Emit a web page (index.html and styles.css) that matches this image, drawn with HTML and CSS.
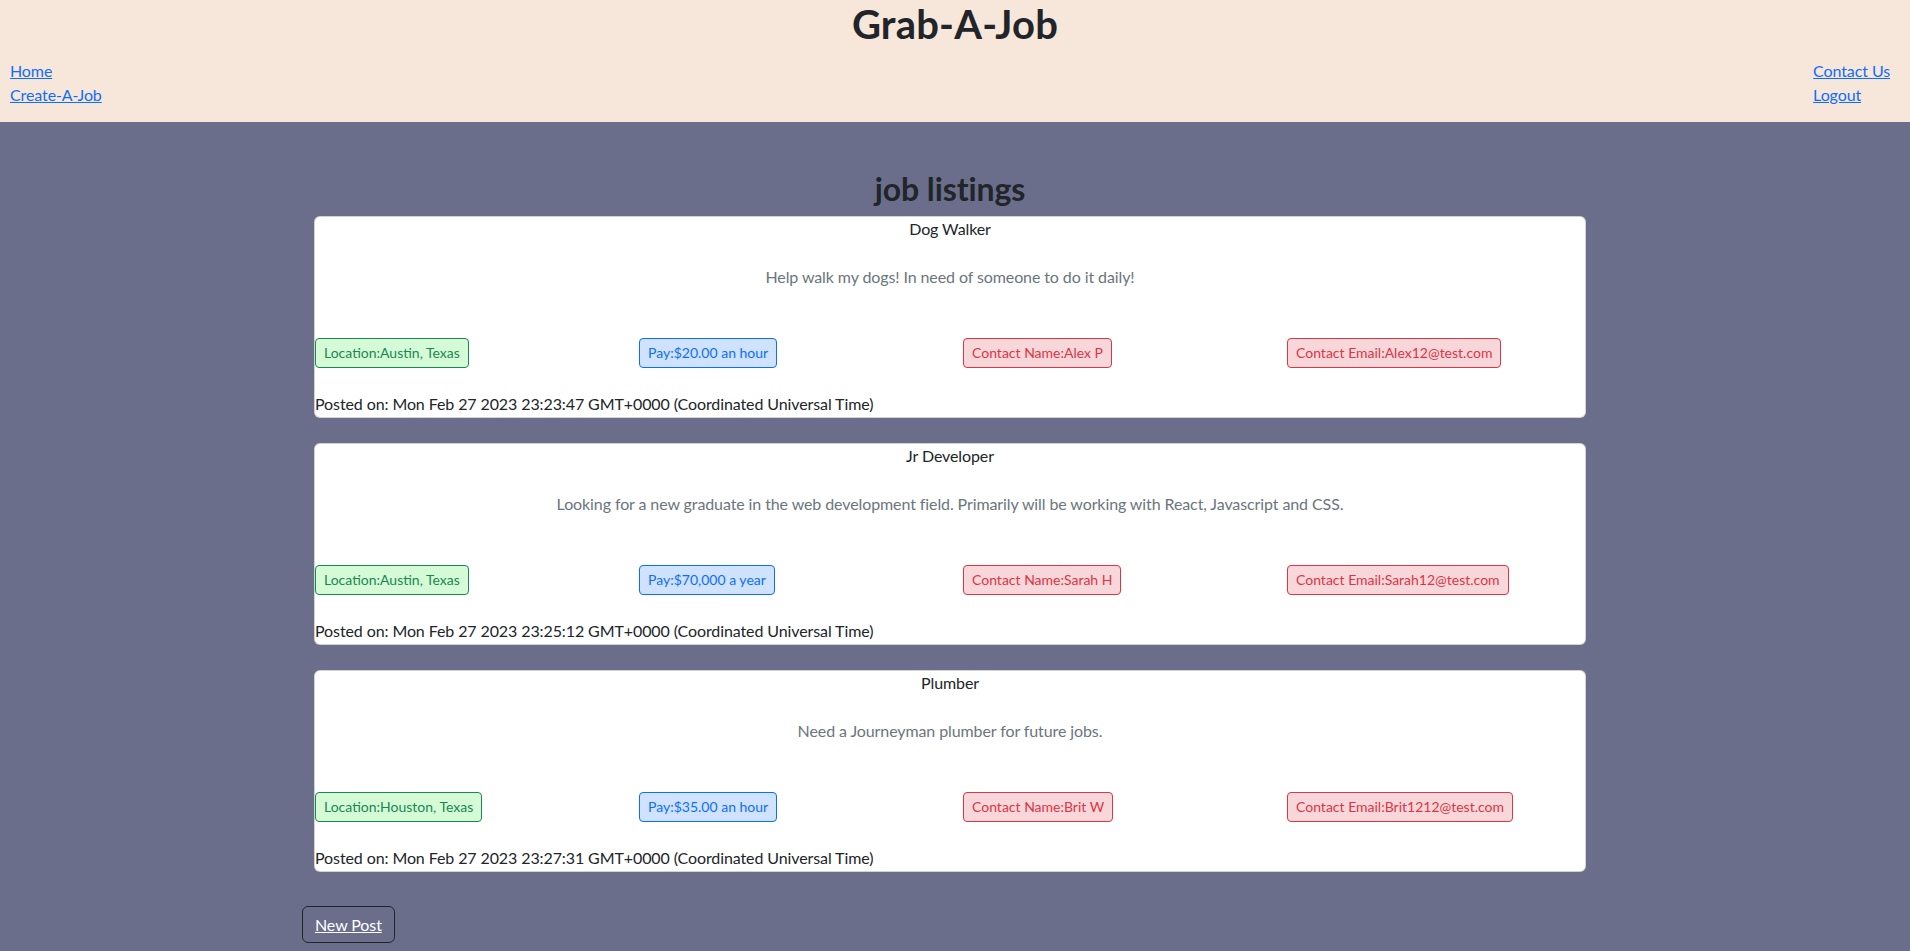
FILE: index.html
```html
<!DOCTYPE html>
<html lang="en">
<head>
<meta charset="utf-8">
<title>Grab-A-Job</title>
<link rel="stylesheet" href="styles.css">
</head>
<body>
<header class="site-header">
  <h1 class="brand">Grab-A-Job</h1>
  <nav class="nav">
    <div class="nav-col">
      <a href="#">Home</a>
      <a href="#">Create-A-Job</a>
    </div>
    <div class="nav-col">
      <a href="#">Contact Us</a>
      <a href="#">Logout</a>
    </div>
  </nav>
</header>
<main class="main">
  <div class="container">
    <h2 class="page-title">job listings</h2>

    <div class="card">
      <div class="card-title">Dog Walker</div>
      <p class="card-desc">Help walk my dogs! In need of someone to do it daily!</p>
      <div class="badge-row">
        <div><span class="badge badge-green">Location:Austin, Texas</span></div>
        <div><span class="badge badge-blue">Pay:$20.00 an hour</span></div>
        <div><span class="badge badge-red">Contact Name:Alex P</span></div>
        <div><span class="badge badge-red">Contact Email:Alex12@test.com</span></div>
      </div>
      <div class="posted">Posted on: Mon Feb 27 2023 23:23:47 GMT+0000 (Coordinated Universal Time)</div>
    </div>

    <div class="card">
      <div class="card-title">Jr Developer</div>
      <p class="card-desc">Looking for a new graduate in the web development field. Primarily will be working with React, Javascript and CSS.</p>
      <div class="badge-row">
        <div><span class="badge badge-green">Location:Austin, Texas</span></div>
        <div><span class="badge badge-blue">Pay:$70,000 a year</span></div>
        <div><span class="badge badge-red">Contact Name:Sarah H</span></div>
        <div><span class="badge badge-red">Contact Email:Sarah12@test.com</span></div>
      </div>
      <div class="posted">Posted on: Mon Feb 27 2023 23:25:12 GMT+0000 (Coordinated Universal Time)</div>
    </div>

    <div class="card">
      <div class="card-title">Plumber</div>
      <p class="card-desc">Need a Journeyman plumber for future jobs.</p>
      <div class="badge-row">
        <div><span class="badge badge-green">Location:Houston, Texas</span></div>
        <div><span class="badge badge-blue">Pay:$35.00 an hour</span></div>
        <div><span class="badge badge-red">Contact Name:Brit W</span></div>
        <div><span class="badge badge-red">Contact Email:Brit1212@test.com</span></div>
      </div>
      <div class="posted">Posted on: Mon Feb 27 2023 23:27:31 GMT+0000 (Coordinated Universal Time)</div>
    </div>

    <div class="actions">
      <a href="#" class="btn-outline">New Post</a>
    </div>
  </div>
</main>
</body>
</html>
```
FILE: styles.css
```css
* { box-sizing: border-box; }
html, body { margin: 0; padding: 0; }
body {
  font-family: Lato, "Liberation Sans", sans-serif;
  font-size: 16px;
  line-height: 24px;
  letter-spacing: -0.1px;
  color: #212529;
  background: #6a6e8b;
  min-height: 951px;
}
a { color: #0d6efd; text-decoration: underline; }

.site-header {
  background: #f7e7da;
  height: 122px;
}
.brand {
  margin: 0;
  text-align: center;
  font-size: 40px;
  line-height: 48px;
  font-weight: 700;
  letter-spacing: 0.2px;
  color: #212529;
}
.nav {
  display: flex;
  justify-content: space-between;
  padding: 11px 20px 0 10px;
}
.nav-col {
  display: flex;
  flex-direction: column;
  align-items: flex-start;
}

.main {
  padding: 48px 10px 0 0;
}
.container {
  width: 1296px;
  margin: 0 auto;
}
.page-title {
  margin: 0 0 8px;
  text-align: center;
  font-size: 32px;
  line-height: 38.4px;
  font-weight: 700;
  color: #212529;
}

.card {
  margin: 0 12px 25px;
  height: 202px;
  background: #fff;
  border: 1px solid rgba(0, 0, 0, 0.175);
  border-radius: 6px;
  display: flex;
  flex-direction: column;
}
.card-title {
  text-align: center;
  line-height: 24px;
}
.card-desc {
  margin: 24px 0 0;
  text-align: center;
  color: #6c757d;
}
.badge-row {
  display: grid;
  grid-template-columns: repeat(4, 324px);
  margin-top: 49px;
}
.badge {
  display: inline-block;
  font-size: 14px;
  line-height: 28px;
  padding: 0 8px;
  border: 1px solid;
  border-radius: 4px;
  letter-spacing: 0;
}
.badge-green { background: #d5fbd6; border-color: #198754; color: #198754; }
.badge-blue { background: #cfe2ff; border-color: #0d6efd; color: #0d6efd; }
.badge-red { background: #f8d7da; border-color: #dc3545; color: #dc3545; }
.posted {
  margin-top: 24px;
  line-height: 24px;
}

.actions {
  padding-top: 9px;
}
.btn-outline {
  display: inline-block;
  color: #fff;
  border: 1px solid #212529;
  border-radius: 6px;
  padding: 6px 12px 5px;
  line-height: 24px;
}
```
